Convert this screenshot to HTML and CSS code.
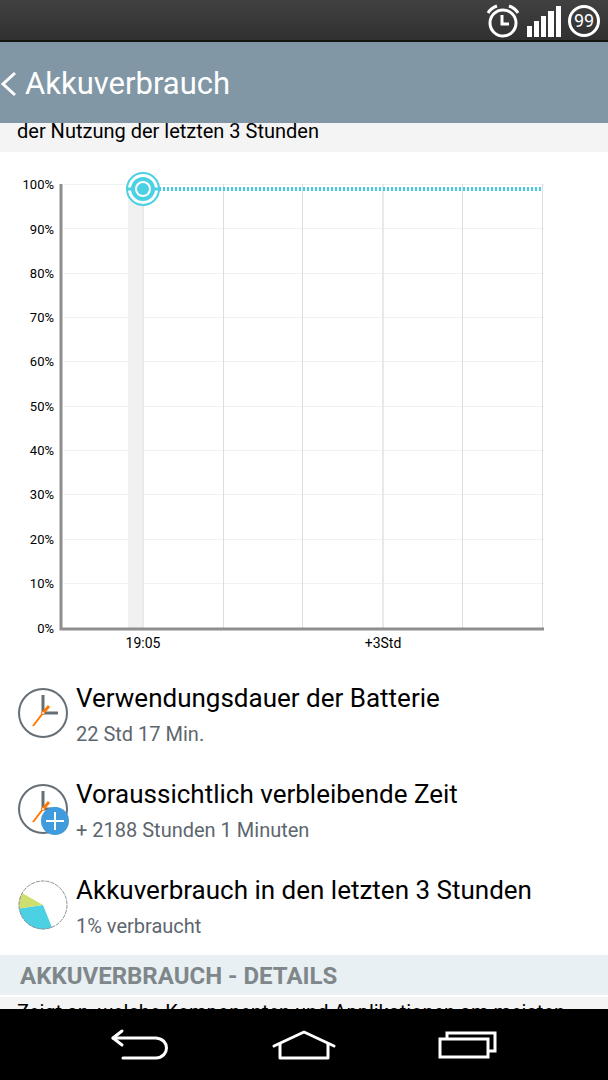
FILE: index.html
```html
<!DOCTYPE html>
<html lang="de">
<head>
    <meta charset="UTF-8">
    <meta name="viewport" content="width=device-width, initial-scale=1.0">
    <title>Akkuverbrauch</title>
    <link rel="stylesheet" href="styles.css">
</head>
<body>
    <div class="phone">
        <div class="status-bar">
            <svg width="34" height="34" viewBox="0 0 34 34" fill="none" stroke="#fff" aria-label="Wecker">
                <circle cx="17" cy="19" r="13" stroke-width="3"/>
                <path d="M16 11v9h7" stroke-width="3"/>
                <path d="M2 9Q5 4 11 2M23 2Q29 4 32 9" stroke-width="3"/>
            </svg>
            <svg width="34" height="34" viewBox="0 0 34 34" fill="#fff" aria-label="Signal">
                <path d="M0 22h5v11H0zM7 17h5v16H7zM14 12h5v21h-5zM21 7h6v26h-6zM29 2h5v31h-5z"/>
            </svg>
            <div class="battery">99</div>
        </div>

        <header class="title-bar">
            <button type="button" class="back" aria-label="Zurück">
                <svg width="17" height="26" viewBox="0 0 17 26" fill="none" stroke="#fff" stroke-width="3">
                    <path d="M15 2L3 13L15 24"/>
                </svg>
            </button>
            <h1>Akkuverbrauch</h1>
        </header>

        <main class="content">
            <p class="intro intro-top">der Nutzung der letzten 3 Stunden</p>

            <svg class="chart" viewBox="0 0 608 513" role="img" aria-label="Akkustand">
                <!-- Elapsed time -->
                <rect x="128" y="37" width="15" height="439" fill="#f1f1f1"/>

                <!-- Grid -->
                <path class="grid-h" d="M63 32.500H544M63 76.500H544M63 121.500H544M63 165.500H544M63 209.500H544M63 254.500H544M63 298.500H544M63 342.500H544M63 387.500H544M63 431.500H544"/>
                <path class="grid-v" d="M223.500 32V476M302.500 32V476M462.500 32V476M542.500 32V476"/>
                <path class="grid-main" d="M143 32V476M383 32V476"/>

                <!-- Axes -->
                <path class="axis" d="M61 32V477H544"/>

                <g class="labels-y">
                    <text x="54" y="37">100%</text>
                    <text x="54" y="82">90%</text>
                    <text x="54" y="126">80%</text>
                    <text x="54" y="170">70%</text>
                    <text x="54" y="214">60%</text>
                    <text x="54" y="259">50%</text>
                    <text x="54" y="303">40%</text>
                    <text x="54" y="347">30%</text>
                    <text x="54" y="392">20%</text>
                    <text x="54" y="436">10%</text>
                    <text x="54" y="481">0%</text>
                </g>
                <g class="labels-x">
                    <text x="143" y="496">19:05</text>
                    <text x="383" y="496">+3Std</text>
                </g>

                <!-- Forecast and current level -->
                <path class="forecast" d="M159 37H543"/>
                <circle cx="143" cy="37" r="16" fill="#fff" stroke="#4cd0e3" stroke-width="2"/>
                <path d="M128 37H160" stroke="#4cd0e3" stroke-width="3"/>
                <circle cx="143" cy="37" r="10" fill="#fff" stroke="#4cd0e3" stroke-width="4"/>
                <circle cx="143" cy="37" r="6" fill="#4cd0e3"/>
            </svg>

            <div class="row">
                <svg width="52" height="52" viewBox="0 0 52 52" fill="none">
                    <circle cx="25" cy="25" r="24" stroke="#666e76" stroke-width="2"/>
                    <path d="M25 7V25H40" stroke="#666e76" stroke-width="3"/>
                    <path d="M25 25L15 38" stroke="#ff7800" stroke-width="2"/>
                    <path d="M25 25L31 18" stroke="#ff7800" stroke-width="3"/>
                    <circle cx="25" cy="25" r="1.500" fill="#fff" stroke="#ff7800"/>
                </svg>
                <div class="row-text">
                    <h2>Verwendungsdauer der Batterie</h2>
                    <p>22 Std 17 Min.</p>
                </div>
            </div>
            <div class="row">
                <svg width="52" height="52" viewBox="0 0 52 52" fill="none">
                    <circle cx="25" cy="25" r="24" stroke="#666e76" stroke-width="2"/>
                    <path d="M25 7V25H40" stroke="#666e76" stroke-width="3"/>
                    <path d="M25 25L15 38" stroke="#ff7800" stroke-width="2"/>
                    <path d="M25 25L31 18" stroke="#ff7800" stroke-width="3"/>
                    <circle cx="25" cy="25" r="1.500" fill="#fff" stroke="#ff7800"/>
                    <circle cx="37" cy="37" r="14" fill="#3f9bdc"/>
                    <path d="M37 28V46M28 37H46" stroke="#fff" stroke-width="2"/>
                </svg>
                <div class="row-text">
                    <h2>Voraussichtlich verbleibende Zeit</h2>
                    <p>+ 2188 Stunden 1 Minuten</p>
                </div>
            </div>
            <div class="row">
                <svg width="52" height="52" viewBox="0 0 52 52" fill="none">
                    <path d="M25 25L1 28.500A24.300 24.300 0 0 0 34 47.500Z" fill="#4cd0e3"/>
                    <path d="M25 25L4 13A24.300 24.300 0 0 0 1 28.500Z" fill="#cfdf6f"/>
                    <circle cx="25" cy="25" r="24" stroke="#8a9095" stroke-dasharray="4 1"/>
                </svg>
                <div class="row-text">
                    <h2>Akkuverbrauch in den letzten 3 Stunden</h2>
                    <p>1% verbraucht</p>
                </div>
            </div>

            <h3 class="section-title">AKKUVERBRAUCH - DETAILS</h3>
            <p class="intro intro-details">Zeigt an, welche Komponenten und Applikationen am meisten</p>
        </main>

        <nav class="nav-bar">
            <button type="button" aria-label="Zurück">
                <svg width="60" height="34" viewBox="0 0 60 34" fill="none" stroke="#fff" stroke-width="3" stroke-linecap="round">
                    <path d="M3 10H46C60 11 60 29 46 30H13"/>
                    <path d="M12 3L3 10L12 17" stroke-linejoin="round"/>
                </svg>
            </button>
            <button type="button" aria-label="Startseite">
                <svg width="64" height="34" viewBox="0 0 64 34" fill="none" stroke="#fff" stroke-width="3" stroke-linecap="round" stroke-linejoin="round">
                    <path d="M2 18L32 4L62 18"/>
                    <path d="M8 16V30H56V16"/>
                </svg>
            </button>
            <button type="button" aria-label="Letzte Apps">
                <svg width="60" height="34" viewBox="0 0 60 34" fill="none" stroke="#fff" stroke-width="3">
                    <path d="M9 11V5H57V23H51"/>
                    <path d="M2 11H50V29H2Z"/>
                </svg>
            </button>
        </nav>
    </div>
</body>
</html>
```
FILE: styles.css
```css
html, body {
    height: 100%;
    margin: 0;
    font-family: Roboto, sans-serif;
    color: #000;
}

h1, h2, h3, p {
    margin: 0;
    font-weight: 400;
}

button {
    padding: 0;
    border: none;
    background: none;
    cursor: pointer;
}

svg {
    display: block;
    flex: none;
}

.phone {
    display: flex;
    flex-direction: column;
    height: 100vh;
    background-color: #fff;
}

.status-bar {
    display: flex;
    flex: none;
    align-items: center;
    justify-content: flex-end;
    gap: 7px;
    box-sizing: border-box;
    height: 42px;
    padding: 2px 8px 0 0;
    background: linear-gradient(#414141, #303030);
    border-bottom: 2px solid #15150f;
}

.battery {
    box-sizing: border-box;
    width: 32px;
    height: 32px;
    border: 3px solid #fff;
    border-radius: 50%;
    color: #fff;
    font-size: 18px;
    line-height: 26px;
    text-align: center;
}

.title-bar {
    display: flex;
    flex: none;
    align-items: center;
    gap: 8px;
    box-sizing: border-box;
    height: 81px;
    padding-top: 2px;
    background-color: #8197a5;
    color: #fff;
}

.title-bar h1 {
    font-size: 31px;
}

.content {
    flex: 1;
    min-height: 0;
    overflow: hidden; /* Scrolled text is cut off at both ends */
}

.intro {
    padding: 0 17px;
    background-color: #f4f4f4;
    font-size: 20px;
    line-height: 28px;
    white-space: nowrap;
}

.intro-top {
    margin-top: -6px;
    padding-bottom: 7px;
}

.intro-details {
    padding-top: 1px;
}

.chart {
    width: 100%;
    height: auto;
    fill: none;
}

.grid-h {
    stroke: #f1f1f1;
}

.grid-v {
    stroke: #dedede;
}

.grid-main {
    stroke: #e9e9e9;
    stroke-width: 2;
}

.axis {
    stroke: #8e8e8e;
    stroke-width: 3;
}

.forecast {
    stroke: #3fcfe6;
    stroke-width: 4;
    stroke-dasharray: 2 2;
}

.labels-y, .labels-x {
    fill: #000;
    font-size: 13px;
    text-anchor: end;
}

.labels-x {
    font-size: 14px;
    text-anchor: middle;
}

.row {
    display: flex;
    align-items: center;
    gap: 6px;
    box-sizing: border-box;
    height: 96px;
    padding: 2px 18px 0;
}

.row-text {
    padding-top: 4px;
}

.row h2 {
    font-size: 26px;
    line-height: 36px;
}

.row p {
    color: #5d666e;
    font-size: 20px;
    line-height: 36px;
}

.section-title {
    margin: 2px 0;
    padding: 2px 20px 0;
    background-color: #e8f0f3;
    color: #80878a;
    font-size: 24px;
    font-weight: 700;
    line-height: 38px;
}

.nav-bar {
    display: flex;
    flex: none;
    align-items: center;
    justify-content: space-between;
    height: 71px;
    padding: 0 110px;
    background-color: #000;
}
```
